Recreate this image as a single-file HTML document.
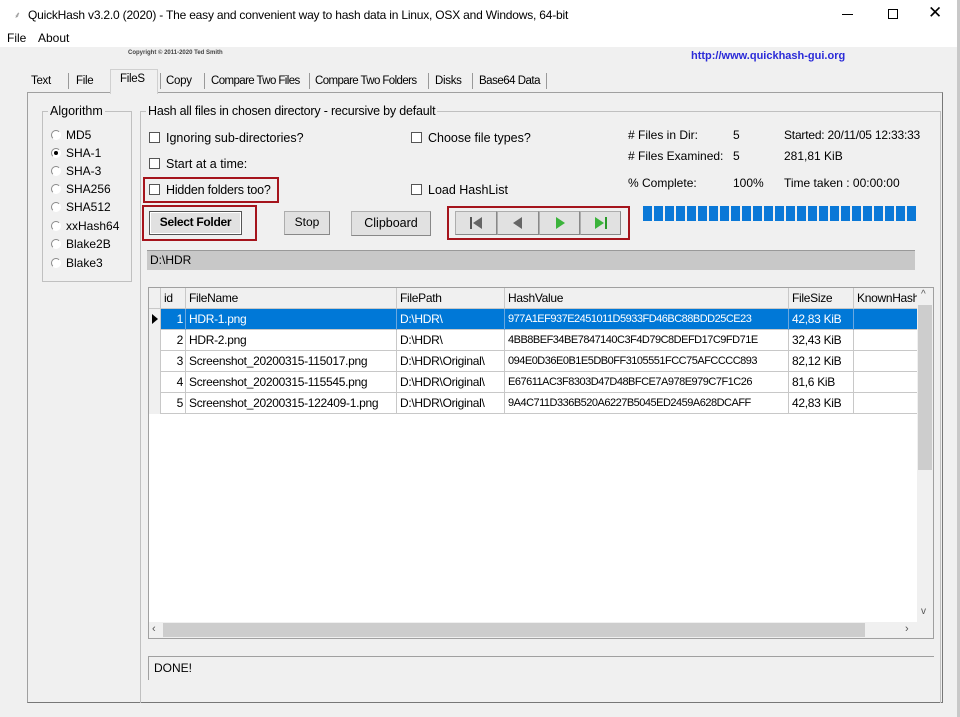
<!DOCTYPE html><html><head><meta charset="utf-8"><style>
*{box-sizing:border-box;margin:0;padding:0}
body{width:960px;height:717px;background:#f0f0f0;font-family:"Liberation Sans",sans-serif;font-size:12px;color:#000;position:relative;overflow:hidden}
.a{position:absolute;white-space:nowrap}
.btn{position:absolute;background:#e1e1e1;border:1px solid #adadad;border-right-color:#888;border-bottom-color:#888;text-align:center;font-size:12px}
.red{position:absolute;border:2px solid #a5141c}
.cb{position:absolute;width:11px;height:11px;border:1px solid #555;background:#fff}
.rd{position:absolute;width:10px;height:10px;border-radius:50%;border:1px solid #888;border-right-color:#fff;border-bottom-color:#fff;background:#fff}
.row{position:absolute;left:149px;width:768px;height:21px;border-bottom:1px solid #c8c8c8}
.c{position:absolute;top:0;height:21px;line-height:20px;border-right:1px solid #c8c8c8;padding-left:3px;overflow:hidden;white-space:nowrap;letter-spacing:-0.3px}
.h{font-size:11px;letter-spacing:-0.5px}
.t{font-size:11.5px;letter-spacing:-0.3px}
</style></head><body>
<div class="a" style="left:0;top:0;width:960px;height:47px;background:#fff"></div>
<div class="a" style="left:957px;top:0;width:3px;height:717px;background:#c8c8c8"></div>
<div class="a" style="left:14px;top:8px;font-size:9px;color:#888">⸙</div>
<div class="a" style="left:28px;top:8px;font-size:12px;letter-spacing:-0.2px">QuickHash v3.2.0 (2020) - The easy and convenient way to hash data in Linux, OSX and Windows, 64-bit</div>
<div class="a" style="left:842px;top:14px;width:11px;height:1px;background:#000"></div>
<div class="a" style="left:888px;top:9px;width:10px;height:10px;border:1px solid #000"></div>
<div class="a" style="left:928px;top:3px;font-size:17px">✕</div>
<div class="a" style="left:7px;top:31px;font-size:12px">File</div>
<div class="a" style="left:38px;top:31px;font-size:12px">About</div>
<div class="a" style="left:128px;top:50px;font-size:6px;font-weight:bold;color:#444">Copyright © 2011-2020 Ted Smith</div>
<div class="a" style="left:691px;top:50px;font-size:11px;font-weight:bold;color:#2a2ad8">http://www.quickhash-gui.org</div>
<div class="a" style="left:27px;top:92px;width:916px;height:611px;border:1px solid #a0a0a0;border-bottom-color:#777;border-right-color:#777;background:#f0f0f0"></div>
<div class="a" style="left:110px;top:69px;width:48px;height:25px;background:#f0f0f0;border:1px solid #d0d0d0;border-bottom:none"></div>
<div class="a t" style="left:31px;top:75px">Text</div>
<div class="a" style="left:68px;top:73px;width:1px;height:16px;background:#999"></div>
<div class="a t" style="left:76px;top:75px">File</div>
<div class="a t" style="left:120px;top:73px">FileS</div>
<div class="a" style="left:160px;top:73px;width:1px;height:16px;background:#999"></div>
<div class="a t" style="left:166px;top:75px">Copy</div>
<div class="a" style="left:204px;top:73px;width:1px;height:16px;background:#999"></div>
<div class="a t" style="left:211px;top:75px;letter-spacing:-0.6px">Compare Two Files</div>
<div class="a" style="left:309px;top:73px;width:1px;height:16px;background:#999"></div>
<div class="a t" style="left:315px;top:75px;letter-spacing:-0.6px">Compare Two Folders</div>
<div class="a" style="left:428px;top:73px;width:1px;height:16px;background:#999"></div>
<div class="a t" style="left:435px;top:75px">Disks</div>
<div class="a" style="left:472px;top:73px;width:1px;height:16px;background:#999"></div>
<div class="a t" style="left:479px;top:75px;letter-spacing:-0.5px">Base64 Data</div>
<div class="a" style="left:546px;top:73px;width:1px;height:16px;background:#999"></div>
<div class="a" style="left:42px;top:111px;width:90px;height:171px;border:1px solid #c0c0c0"></div>
<div class="a" style="left:48px;top:104px;background:#f0f0f0;padding:0 2px;font-size:12.5px">Algorithm</div>
<div class="rd" style="left:51px;top:130px"></div><div class="a" style="left:66px;top:128px">MD5</div>
<div class="rd" style="left:51px;top:148px"></div><div class="a" style="left:54px;top:151px;width:4px;height:4px;border-radius:50%;background:#000"></div><div class="a" style="left:66px;top:146px">SHA-1</div>
<div class="rd" style="left:51px;top:166px"></div><div class="a" style="left:66px;top:164px">SHA-3</div>
<div class="rd" style="left:51px;top:184px"></div><div class="a" style="left:66px;top:182px">SHA256</div>
<div class="rd" style="left:51px;top:202px"></div><div class="a" style="left:66px;top:200px">SHA512</div>
<div class="rd" style="left:51px;top:221px"></div><div class="a" style="left:66px;top:219px">xxHash64</div>
<div class="rd" style="left:51px;top:239px"></div><div class="a" style="left:66px;top:237px">Blake2B</div>
<div class="rd" style="left:51px;top:258px"></div><div class="a" style="left:66px;top:256px">Blake3</div>
<div class="a" style="left:140px;top:111px;width:801px;height:592px;border:1px solid #c0c0c0;border-bottom:none"></div>
<div class="a" style="left:146px;top:104px;background:#f0f0f0;padding:0 2px;font-size:12.5px;letter-spacing:-0.2px">Hash all files in chosen directory - recursive by default</div>
<div class="cb" style="left:149px;top:132px"></div><div class="a" style="left:166px;top:131px;font-size:12.5px">Ignoring sub-directories?</div>
<div class="cb" style="left:149px;top:158px"></div><div class="a" style="left:166px;top:157px;font-size:12.5px">Start at a time:</div>
<div class="cb" style="left:149px;top:184px"></div><div class="a" style="left:166px;top:183px;font-size:12.5px;letter-spacing:-0.2px">Hidden folders too?</div>
<div class="red" style="left:143px;top:177px;width:136px;height:26px"></div>
<div class="cb" style="left:411px;top:132px"></div><div class="a" style="left:428px;top:131px;font-size:12.5px">Choose file types?</div>
<div class="cb" style="left:411px;top:184px"></div><div class="a" style="left:428px;top:183px;font-size:12.5px">Load HashList</div>
<div class="red" style="left:142px;top:205px;width:115px;height:36px"></div>
<div class="btn" style="left:149px;top:211px;width:93px;height:24px;line-height:21px;font-weight:bold;border:1px solid #555;box-shadow:inset 0 0 0 1px #fff;letter-spacing:-0.3px">Select Folder</div>
<div class="btn" style="left:284px;top:211px;width:46px;height:24px;line-height:21px">Stop</div>
<div class="btn" style="left:351px;top:211px;width:80px;height:25px;line-height:23px;font-size:12.5px">Clipboard</div>
<div class="red" style="left:447px;top:206px;width:183px;height:34px"></div>
<div class="btn" style="left:455px;top:211px;width:42px;height:24px"><svg width="14" height="12" style="margin-top:5px"><rect x="1" y="0" width="2" height="12" fill="#555"/><path d="M13 0L4 6L13 12Z" fill="#666"/></svg></div>
<div class="btn" style="left:497px;top:211px;width:42px;height:24px"><svg width="12" height="12" style="margin-top:5px"><path d="M10 0L1 6L10 12Z" fill="#666"/></svg></div>
<div class="btn" style="left:539px;top:211px;width:41px;height:24px"><svg width="12" height="12" style="margin-top:5px"><path d="M2 0L11 6L2 12Z" fill="#3bb33b"/></svg></div>
<div class="btn" style="left:580px;top:211px;width:41px;height:24px"><svg width="14" height="12" style="margin-top:5px"><path d="M1 0L10 6L1 12Z" fill="#3bb33b"/><rect x="11" y="0" width="2" height="12" fill="#2a9a2a"/></svg></div>
<div class="a" style="left:628px;top:128px">#&nbsp;Files in Dir:</div><div class="a" style="left:733px;top:128px">5</div>
<div class="a" style="left:784px;top:128px;letter-spacing:-0.2px">Started: 20/11/05 12:33:33</div>
<div class="a" style="left:628px;top:149px">#&nbsp;Files Examined:</div><div class="a" style="left:733px;top:149px">5</div>
<div class="a" style="left:784px;top:149px">281,81 KiB</div>
<div class="a" style="left:628px;top:176px">% Complete:</div><div class="a" style="left:733px;top:176px">100%</div>
<div class="a" style="left:784px;top:176px">Time taken : 00:00:00</div>
<div class="a" style="left:643px;top:206px;width:274px;height:15px;background:repeating-linear-gradient(90deg,#0a78d7 0 9px,#f0f0f0 9px 11px)"></div>
<div class="a" style="left:147px;top:250px;width:768px;height:20px;background:#c8c8c8;border-top:1px solid #999;line-height:19px;padding-left:3px">D:\HDR</div>
<div class="a" style="left:148px;top:287px;width:786px;height:352px;background:#fff;border:1px solid #a0a0a0"></div>
<div class="a" style="left:149px;top:288px;width:768px;height:21px;background:#f0f0f0;border-bottom:1px solid #c8c8c8"></div>
<div class="row" style="top:288px;border:none"><div class="c" style="left:0;width:12px"></div><div class="c" style="left:12px;width:25px">id</div><div class="c" style="left:37px;width:211px">FileName</div><div class="c" style="left:248px;width:108px">FilePath</div><div class="c" style="left:356px;width:284px">HashValue</div><div class="c" style="left:640px;width:65px">FileSize</div><div class="c" style="left:705px;width:63px;border:none">KnownHash</div></div>
<div class="a" style="left:149px;top:309px;width:12px;height:105px;background:#f0f0f0"></div>
<div class="a" style="left:152px;top:314px;width:0;height:0;border-left:6px solid #000;border-top:5px solid transparent;border-bottom:5px solid transparent"></div>
<div class="row" style="top:309px;background:#0078d7;color:#fff;left:161px;width:756px"><div class="c" style="left:0;width:25px;text-align:right;padding-right:2px;border-color:#6aa8e0">1</div><div class="c" style="left:25px;width:211px;border-color:#6aa8e0">HDR-1.png</div><div class="c" style="left:236px;width:108px;border-color:#6aa8e0">D:\HDR\</div><div class="c h" style="left:344px;width:284px;border-color:#6aa8e0">977A1EF937E2451011D5933FD46BC88BDD25CE23</div><div class="c" style="left:628px;width:65px;border-color:#6aa8e0">42,83 KiB</div></div>
<div class="row" style="top:330px;left:161px;width:756px"><div class="c" style="left:0;width:25px;text-align:right;padding-right:2px">2</div><div class="c" style="left:25px;width:211px">HDR-2.png</div><div class="c" style="left:236px;width:108px">D:\HDR\</div><div class="c h" style="left:344px;width:284px">4BB8BEF34BE7847140C3F4D79C8DEFD17C9FD71E</div><div class="c" style="left:628px;width:65px">32,43 KiB</div></div>
<div class="row" style="top:351px;left:161px;width:756px"><div class="c" style="left:0;width:25px;text-align:right;padding-right:2px">3</div><div class="c" style="left:25px;width:211px">Screenshot_20200315-115017.png</div><div class="c" style="left:236px;width:108px">D:\HDR\Original\</div><div class="c h" style="left:344px;width:284px">094E0D36E0B1E5DB0FF3105551FCC75AFCCCC893</div><div class="c" style="left:628px;width:65px">82,12 KiB</div></div>
<div class="row" style="top:372px;left:161px;width:756px"><div class="c" style="left:0;width:25px;text-align:right;padding-right:2px">4</div><div class="c" style="left:25px;width:211px">Screenshot_20200315-115545.png</div><div class="c" style="left:236px;width:108px">D:\HDR\Original\</div><div class="c h" style="left:344px;width:284px">E67611AC3F8303D47D48BFCE7A978E979C7F1C26</div><div class="c" style="left:628px;width:65px">81,6 KiB</div></div>
<div class="row" style="top:393px;left:161px;width:756px"><div class="c" style="left:0;width:25px;text-align:right;padding-right:2px">5</div><div class="c" style="left:25px;width:211px">Screenshot_20200315-122409-1.png</div><div class="c" style="left:236px;width:108px">D:\HDR\Original\</div><div class="c h" style="left:344px;width:284px">9A4C711D336B520A6227B5045ED2459A628DCAFF</div><div class="c" style="left:628px;width:65px">42,83 KiB</div></div>
<div class="a" style="left:149px;top:309px;width:12px;height:105px;border-right:1px solid #c8c8c8"></div>
<div class="a" style="left:917px;top:288px;width:16px;height:334px;background:#f0f0f0"></div>
<div class="a" style="left:918px;top:305px;width:14px;height:165px;background:#cdcdcd"></div>
<div class="a" style="left:921px;top:289px;font-size:10px;color:#555">^</div>
<div class="a" style="left:921px;top:606px;font-size:10px;color:#555">v</div>
<div class="a" style="left:149px;top:622px;width:784px;height:16px;background:#f0f0f0"></div>
<div class="a" style="left:163px;top:623px;width:702px;height:14px;background:#cdcdcd"></div>
<div class="a" style="left:152px;top:623px;font-size:11px;color:#555">‹</div>
<div class="a" style="left:905px;top:623px;font-size:11px;color:#555">›</div>
<div class="a" style="left:148px;top:656px;width:786px;height:24px;border-top:1px solid #a0a0a0;border-left:1px solid #a0a0a0;line-height:22px;padding-left:5px">DONE!</div>
</body></html>
